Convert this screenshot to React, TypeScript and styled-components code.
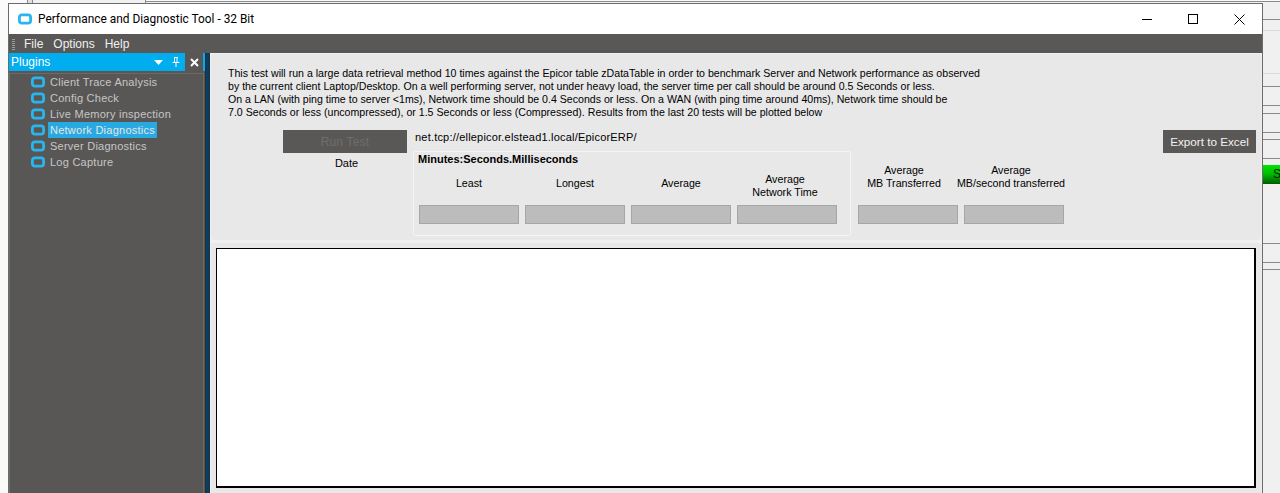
import React from 'react';
import styled, { createGlobalStyle } from 'styled-components';

const GlobalStyle = createGlobalStyle`
    html, body { margin: 0; padding: 0; height: 100%; overflow: hidden; background: #f0f0f0; }
    body { font-family: "Liberation Sans", Arial, sans-serif; }
`;

const Desktop = styled.div`
    display: grid;
    grid-template-columns: 8px 1255px 17px;
    grid-template-rows: 3px 490px;
    width: 1280px;
    height: 493px;
    overflow: hidden;
`;

const TopStrip = styled.div`
    grid-column: 1 / -1;
    display: flex;
    background: #fafafa;
`;

const TopTick = styled.span<{ $width: number; $tone: string; $ruled?: boolean }>`
    width: ${(p) => p.$width}px;
    background: ${(p) => p.$tone};
    box-sizing: border-box;
    ${(p) => p.$ruled && 'margin-top: 1px; border-top: 1px solid #8a8a8a;'}
`;

const LeftGutter = styled.div`
    background: #fafafa;
`;

const RightStrip = styled.div`
    display: flex;
    flex-direction: column;
    background: #f0f0f0;
`;

const StripRow = styled.div<{ $height: number; $line?: string }>`
    height: ${(p) => p.$height}px;
    flex: none;
    box-sizing: border-box;
    border-bottom: 1px solid ${(p) => p.$line || '#8a8a8a'};
`;

const GreenCell = styled.div`
    flex: none;
    height: 19px;
    margin-top: 6px;
    padding-left: 10px;
    font-size: 12px;
    line-height: 19px;
    color: #001a00;
    background: linear-gradient(#00e600, #00b800 50%, #005a00);
`;

const Window = styled.div`
    display: flex;
    flex-direction: column;
    box-sizing: border-box;
    border: 1px solid #6b6b6b;
    border-bottom: none;
    background: #fff;
    overflow: hidden;
`;

const TitleBar = styled.div`
    display: flex;
    align-items: center;
    flex: none;
    height: 30px;
    padding-left: 9px;
    background: #fff;
`;

const TitleText = styled.span`
    margin: 0 0 1px 6px;
    font-family: Roboto, sans-serif;
    font-size: 11.9px;
    color: #000;
`;

const WindowControls = styled.div`
    display: flex;
    margin-left: auto;
`;

const ControlButton = styled.span`
    display: flex;
    align-items: center;
    justify-content: center;
    width: 46px;
    height: 30px;
`;

const MenuBar = styled.div`
    display: flex;
    align-items: center;
    flex: none;
    box-sizing: border-box;
    height: 19px;
    padding: 1px 0 0 3px;
    background: #5a5856;
`;

const Grip = styled.span`
    width: 3px;
    height: 11px;
    margin-right: 9px;
    background: repeating-linear-gradient(#9a9a98 0 1px, #5a5856 1px 2px);
`;

const MenuItem = styled.span`
    margin-right: 10px;
    font-size: 12px;
    color: #f0f0f0;
`;

const Body = styled.div`
    display: flex;
    flex: 1;
    min-height: 0;
    background: #f0f0f0;
`;

const Sidebar = styled.aside`
    display: flex;
    flex-direction: column;
    flex: none;
    width: 196px;
    background: #595755;
`;

const PluginsHeader = styled.div`
    display: flex;
    align-items: center;
    flex: none;
    height: 18px;
    padding: 0 2px 0 2px;
    font-size: 12px;
    color: #fff;
    background: #00adef;
`;

const HeaderButton = styled.span<{ $active?: boolean }>`
    display: flex;
    align-items: center;
    justify-content: center;
    width: 18px;
    height: 18px;
    background: ${(p) => (p.$active ? '#595755' : 'transparent')};
`;

const HeaderButtons = styled.div`
    display: flex;
    margin-left: auto;
`;

const Tree = styled.ul`
    flex: 1;
    margin: 2px 1px 0 0;
    padding: 0 0 0 21px;
    list-style: none;
    border-top: 1px solid #6b6a68;
    border-left: 1px solid #6f6e6c;
    border-right: 1px solid #6b6a68;
`;

const TreeRow = styled.li`
    display: flex;
    align-items: center;
    height: 16px;
`;

const TreeLabel = styled.span<{ $selected?: boolean }>`
    margin-left: 3px;
    padding: 0 2px;
    height: 16px;
    font-size: 11px;
    line-height: 16px;
    letter-spacing: 0.25px;
    color: ${(p) => (p.$selected ? '#e6e6e6' : '#c6c6c6')};
    background: ${(p) => (p.$selected ? '#29a9e1' : 'transparent')};
`;

const Splitter = styled.div`
    flex: none;
    width: 5px;
    box-sizing: border-box;
    background: #083f66;
    border-left: 1px solid #2b2b2b;
    border-right: 1px solid #22303a;
`;

const Content = styled.main`
    display: flex;
    flex-direction: column;
    flex: 1;
    min-width: 0;
    gap: 3px;
    padding: 1px 1px 0 1px;
`;

const ControlPanel = styled.section`
    flex: none;
    box-sizing: border-box;
    height: 186px;
    padding: 13px 5px 0 17px;
    background: #e8e8e8;
    border-radius: 3px;
`;

const Notes = styled.p`
    margin: 0;
    font-size: 10.6px;
    line-height: 13px;
    color: #000;
`;

const ControlsRow = styled.div`
    display: flex;
    margin-top: 11px;
`;

const RunColumn = styled.div`
    display: flex;
    flex-direction: column;
    flex: none;
    width: 124px;
    margin-left: 55px;
`;

const DarkButton = styled.button<{ $disabled?: boolean }>`
    flex: none;
    height: 23px;
    padding: 0 8px;
    border: none;
    font-family: inherit;
    font-size: 12px;
    letter-spacing: 0.2px;
    color: ${(p) => (p.$disabled ? '#6f6d6b' : '#f2f2f2')};
    background: #5a5856;
`;

const DateLabel = styled.span`
    margin-top: 3px;
    padding-left: 3px;
    font-size: 11px;
    line-height: 14px;
    text-align: center;
`;

const MiddleColumn = styled.div`
    flex: none;
    width: 438px;
    margin-left: 6px;
`;

const ServerUrl = styled.div`
    height: 21px;
    padding-left: 2px;
    font-size: 11px;
    line-height: 14px;
    letter-spacing: 0.2px;
`;

const ResultsGroup = styled.fieldset`
    box-sizing: border-box;
    height: 85px;
    margin: 0;
    padding: 0 0 0 5px;
    border: 1px solid #f4f4f4;
    border-radius: 2px;
`;

const GroupTitle = styled.div`
    height: 14px;
    margin-left: -1px;
    font-size: 11px;
    font-weight: bold;
    line-height: 14px;
`;

const MetricRow = styled.div`
    display: flex;
    gap: 6px;
`;

const Metric = styled.div<{ $labelHeight: number }>`
    display: grid;
    grid-template-columns: 100px;
    grid-template-rows: ${(p) => p.$labelHeight}px 19px;
    gap: 6px;
    width: 100px;
`;

const MetricLabel = styled.div<{ $low?: boolean; $shift?: number }>`
    align-self: end;
    justify-self: center;
    padding-bottom: ${(p) => (p.$low ? 0 : 9)}px;
    margin-right: ${(p) => p.$shift || 0}px;
    font-size: 10.7px;
    line-height: 13px;
    text-align: center;
    white-space: nowrap;
`;

const MetricValue = styled.div`
    box-sizing: border-box;
    height: 19px;
    background: #bcbcbc;
    border: 1px solid #a6a6a6;
`;

const TransferColumn = styled.div`
    flex: none;
    margin: 0 0 0 7px;
    padding-top: 21px;
`;

const ExportButton = styled(DarkButton)`
    margin-left: auto;
    width: 93px;
    padding: 0;
    font-size: 11.7px;
    letter-spacing: 0;
`;

const ChartPanel = styled.section`
    flex: 1;
    box-sizing: border-box;
    padding: 5px 5px 0 5px;
    background: #e8e8e8;
`;

const ChartArea = styled.div`
    box-sizing: border-box;
    height: 240px;
    background: #fff;
    border: 1px solid #000;
    border-width: 1px 2px 2px 1px;
`;

const PluginIcon = () => (
    <svg width="14" height="12" viewBox="0 0 14 12" fill="none">
        <rect x="1.4" y="1.9" width="11.2" height="8.2" rx="2.4" stroke="#29b6ee" strokeWidth="2.8" />
    </svg>
);

const PLUGINS = ['Client Trace Analysis', 'Config Check', 'Live Memory inspection', 'Network Diagnostics', 'Server Diagnostics', 'Log Capture'];

const STRIP_ROWS: [number, string?][] = [
    [17],
    [11, '#dcdcdc'],
    [43, '#dcdcdc'],
    [13],
    [19],
    [8],
    [19],
    [7],
    [19],
];

const App = () => (
    <>
        <GlobalStyle />
        <Desktop>
            <TopStrip>
                <TopTick $width={27} $tone="#fafafa" />
                <TopTick $width={1} $tone="#8a8a8a" />
                <TopTick $width={4} $tone="#e0e0e0" />
                <TopTick $width={1} $tone="#8a8a8a" />
                <TopTick $width={112} $tone="#f0f0f0" />
                <TopTick $width={1} $tone="#8a8a8a" />
                <TopTick $width={1134} $tone="#f4f4f4" $ruled />
            </TopStrip>
            <LeftGutter />
            <Window>
                <TitleBar>
                    <PluginIcon />
                    <TitleText>Performance and Diagnostic Tool - 32 Bit</TitleText>
                    <WindowControls>
                        <ControlButton>
                            <svg width="10" height="10" viewBox="0 0 10 10"><path d="M0 5.5h10" stroke="#000" /></svg>
                        </ControlButton>
                        <ControlButton>
                            <svg width="10" height="10" viewBox="0 0 10 10"><rect x=".5" y=".5" width="9" height="9" fill="none" stroke="#000" /></svg>
                        </ControlButton>
                        <ControlButton>
                            <svg width="11" height="11" viewBox="0 0 11 11"><path d="M.5.5l10 10M10.5.5l-10 10" stroke="#000" fill="none" /></svg>
                        </ControlButton>
                    </WindowControls>
                </TitleBar>
                <MenuBar>
                    <Grip />
                    <MenuItem>File</MenuItem>
                    <MenuItem>Options</MenuItem>
                    <MenuItem>Help</MenuItem>
                </MenuBar>
                <Body>
                    <Sidebar>
                        <PluginsHeader>
                            Plugins
                            <HeaderButtons>
                                <HeaderButton>
                                    <svg width="9" height="5" viewBox="0 0 9 5"><path d="M0 0h9L4.5 5z" fill="#fff" /></svg>
                                </HeaderButton>
                                <HeaderButton>
                                    <svg width="8" height="10" viewBox="0 0 8 10"><path d="M2 .5h4M2.5.5v5M5 .5v5M.5 5.5h7M4 6v4" stroke="#fff" fill="none" /></svg>
                                </HeaderButton>
                                <HeaderButton $active>
                                    <svg width="9" height="9" viewBox="0 0 9 9"><path d="M1 1l7 7M8 1L1 8" stroke="#fff" strokeWidth="2" fill="none" /></svg>
                                </HeaderButton>
                            </HeaderButtons>
                        </PluginsHeader>
                        <Tree>
                            {PLUGINS.map((name) => (
                                <TreeRow key={name}>
                                    <PluginIcon />
                                    <TreeLabel $selected={name === 'Network Diagnostics'}>{name}</TreeLabel>
                                </TreeRow>
                            ))}
                        </Tree>
                    </Sidebar>
                    <Splitter />
                    <Content>
                        <ControlPanel>
                            <Notes>
                                This test will run a large data retrieval method 10 times against the Epicor table zDataTable in order to benchmark Server and Network performance as observed
                                <br />
                                by the current client Laptop/Desktop. On a well performing server, not under heavy load, the server time per call should be around 0.5 Seconds or less.
                                <br />
                                On a LAN (with ping time to server &lt;1ms), Network time should be 0.4 Seconds or less. On a WAN (with ping time around 40ms), Network time should be
                                <br />
                                7.0 Seconds or less (uncompressed), or 1.5 Seconds or less (Compressed). Results from the last 20 tests will be plotted below
                            </Notes>
                            <ControlsRow>
                                <RunColumn>
                                    <DarkButton $disabled>Run Test</DarkButton>
                                    <DateLabel>Date</DateLabel>
                                </RunColumn>
                                <MiddleColumn>
                                    <ServerUrl>net.tcp://ellepicor.elstead1.local/EpicorERP/</ServerUrl>
                                    <ResultsGroup>
                                        <GroupTitle>Minutes:Seconds.Milliseconds</GroupTitle>
                                        <MetricRow>
                                            <Metric $labelHeight={33}>
                                                <MetricLabel>Least</MetricLabel>
                                                <MetricValue />
                                            </Metric>
                                            <Metric $labelHeight={33}>
                                                <MetricLabel>Longest</MetricLabel>
                                                <MetricValue />
                                            </Metric>
                                            <Metric $labelHeight={33}>
                                                <MetricLabel>Average</MetricLabel>
                                                <MetricValue />
                                            </Metric>
                                            <Metric $labelHeight={33}>
                                                <MetricLabel $low $shift={4}>Average<br />Network Time</MetricLabel>
                                                <MetricValue />
                                            </Metric>
                                        </MetricRow>
                                    </ResultsGroup>
                                </MiddleColumn>
                                <TransferColumn>
                                    <MetricRow>
                                        <Metric $labelHeight={48}>
                                            <MetricLabel $shift={8}>Average<br />MB Transferred</MetricLabel>
                                            <MetricValue />
                                        </Metric>
                                        <Metric $labelHeight={48}>
                                            <MetricLabel $shift={6}>Average<br />MB/second transferred</MetricLabel>
                                            <MetricValue />
                                        </Metric>
                                    </MetricRow>
                                </TransferColumn>
                                <ExportButton>Export to Excel</ExportButton>
                            </ControlsRow>
                        </ControlPanel>
                        <ChartPanel>
                            <ChartArea />
                        </ChartPanel>
                    </Content>
                </Body>
            </Window>
            <RightStrip>
                {STRIP_ROWS.map(([height, line], i) => (
                    <StripRow key={i} $height={height} $line={line} />
                ))}
                <GreenCell>S</GreenCell>
                <StripRow $height={60} />
                <StripRow $height={19} />
                <StripRow $height={7} />
            </RightStrip>
        </Desktop>
    </>
);

export default App;
